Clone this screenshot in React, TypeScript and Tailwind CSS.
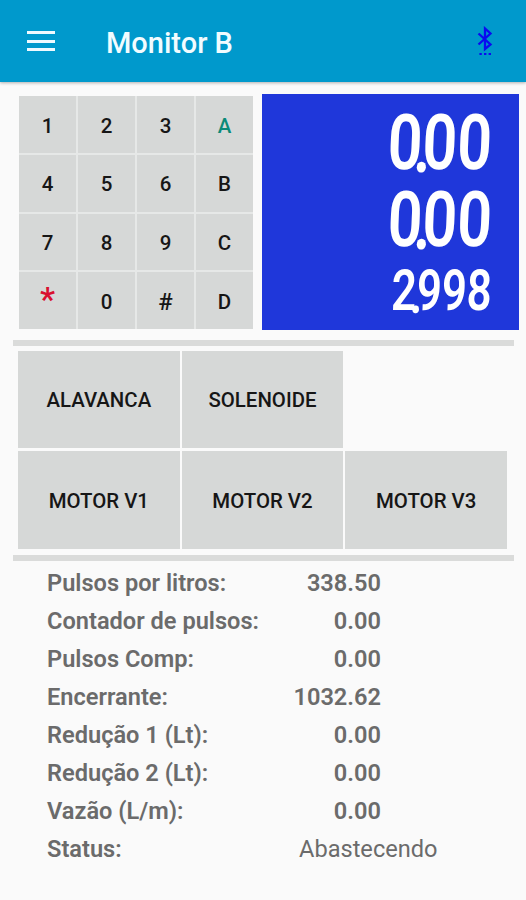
import React from 'react';
import clsx from 'clsx';

interface Reading {
  label: string;
  value: string;
}

const KEYS = ['1', '2', '3', 'A', '4', '5', '6', 'B', '7', '8', '9', 'C', '*', '0', '#', 'D'];

const READINGS: Reading[] = [
  { label: 'Pulsos por litros:', value: '338.50' },
  { label: 'Contador de pulsos:', value: '0.00' },
  { label: 'Pulsos Comp:', value: '0.00' },
  { label: 'Encerrante:', value: '1032.62' },
  { label: 'Redução 1 (Lt):', value: '0.00' },
  { label: 'Redução 2 (Lt):', value: '0.00' },
  { label: 'Vazão (L/m):', value: '0.00' },
];

const BluetoothIcon = () => (
  <svg width="18" height="30" viewBox="0 0 18 30" fill="none" stroke="#0a0af0" strokeWidth="2.3">
    <path d="M2.5 7.5 14.5 18.5 9 23V2.5l5.5 5L2.5 18.5" />
    <path d="M3.4 28h2.4M8 28h2.4M12.6 28h2.4" strokeWidth="2.2" />
  </svg>
);

const Header = () => (
  <header className="flex h-[82px] items-center bg-[#0099cc] pr-8 pl-[27px] shadow-[0_1px_3px_rgba(0,0,0,0.3)]">
    <button className="flex h-5 w-7 flex-col justify-between">
      <span className="h-[3px] w-full bg-[#effaff]" />
      <span className="h-[3px] w-full bg-[#effaff]" />
      <span className="h-[3px] w-full bg-[#effaff]" />
    </button>
    <h1 className="ml-[51px] flex-1 pt-[5px] text-[29px] font-medium text-[#f2fcff]">Monitor B</h1>
    <BluetoothIcon />
  </header>
);

const Keypad = () => (
  <div className="grid h-[233px] w-[234px] grid-cols-4 grid-rows-4 gap-[2px] bg-[#e6e8e7]">
    {KEYS.map((key) => (
      <button
        key={key}
        className={clsx(
          'flex items-center justify-center bg-[#d6d8d7] font-medium',
          key === '*' ? 'pb-1 text-[34px] leading-none text-[#d9102f]' : 'pt-[3px]',
          key === '#' && 'text-[24px]',
          key !== '*' && key !== '#' && 'text-[20.5px]',
          key === 'A' && 'text-[#0b8a78]',
          key !== 'A' && key !== '*' && 'text-[#161616]'
        )}
      >
        {key}
      </button>
    ))}
  </div>
);

const LcdLine = ({ value, small }: { value: string; small?: boolean }) => {
  const [whole, decimals] = value.split('.');
  return (
    <div
      className={clsx(
        'flex origin-right -skew-x-3 items-center justify-end font-semibold leading-none',
        small ? 'h-[62px] scale-x-[0.77] text-[57px]' : 'h-[77px] scale-x-[0.79] text-[77px]'
      )}
    >
      <span>
        {whole}
        <span className={clsx('relative top-[3px]', small ? '-mx-[8px]' : '-mx-[11px]')}>.</span>
        {decimals}
      </span>
    </div>
  );
};

const Lcd = () => (
  <div className="h-[236px] w-[257px] bg-[#1f37da] pt-[11px] pr-[27px] text-white">
    <LcdLine value="0.00" />
    <LcdLine value="0.00" />
    <LcdLine value="2.998" small />
  </div>
);

const Divider = () => <div className="ml-[13px] h-[6px] w-[501px] bg-[#dadbda]" />;

const ActionButton = ({ label }: { label: string }) => (
  <button className="flex items-center justify-center bg-[#d6d8d7] pt-[2px] text-[20.4px] font-medium text-[#161616]">
    {label}
  </button>
);

export default function App() {
  return (
    <div className="h-[900px] w-[526px] overflow-hidden bg-[#fafafa] font-['Roboto','Liberation_Sans',sans-serif]">
      <Header />

      <div className="flex h-[258px] items-start justify-between pt-3 pr-[7px] pl-[19px]">
        <div className="pt-[2px]">
          <Keypad />
        </div>
        <Lcd />
      </div>

      <Divider />

      <div className="ml-[18px] grid w-[489px] grid-cols-3 grid-rows-[97px_98px] gap-x-[2px] gap-y-[3px] pt-[5px] pb-[6px]">
        <ActionButton label="ALAVANCA" />
        <ActionButton label="SOLENOIDE" />
        <span />
        <ActionButton label="MOTOR V1" />
        <ActionButton label="MOTOR V2" />
        <ActionButton label="MOTOR V3" />
      </div>

      <Divider />

      <div className="pt-[4px] pl-[47px] text-[23.6px] text-[#6b6b6b]">
        {READINGS.map((item) => (
          <div key={item.label} className="flex h-[38px] w-[334px] items-center justify-between font-semibold">
            <span>{item.label}</span>
            <span>{item.value}</span>
          </div>
        ))}
        <div className="flex h-[38px] items-center">
          <span className="w-[252px] font-semibold">Status:</span>
          <span>Abastecendo</span>
        </div>
      </div>
    </div>
  );
}
